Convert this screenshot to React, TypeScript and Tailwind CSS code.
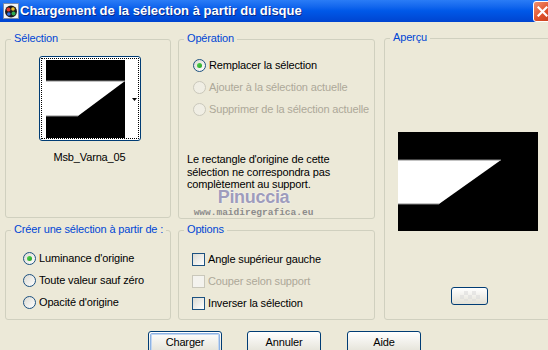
import React from "react";

const Radio = ({ checked = false, disabled = false }: { checked?: boolean; disabled?: boolean }) => (
  <span
    className={
      "relative inline-flex w-[13px] h-[13px] rounded-full border items-center justify-center shrink-0 " +
      (disabled
        ? "border-[#CAC8BB] bg-[#F0EEE4]"
        : "border-[#1C5180] bg-gradient-to-br from-[#DCDBD3] to-white")
    }
  >
    {checked && (
      <span className="w-[5px] h-[5px] rounded-full bg-gradient-to-br from-[#55D551] to-[#21A121]" />
    )}
  </span>
);

const Check = ({ disabled = false }: { disabled?: boolean }) => (
  <span
    className={
      "inline-block w-[13px] h-[13px] border shrink-0 " +
      (disabled
        ? "border-[#CAC8BB] bg-[#F4F3EE]"
        : "border-[#1C5180] bg-gradient-to-br from-[#DCDBD3] to-white")
    }
  />
);

const Group = ({
  label,
  className,
  children,
}: {
  label: string;
  className: string;
  children?: React.ReactNode;
}) => (
  <div className={"relative border border-[#D0D0BF] rounded-[3px] " + className}>
    <span className="absolute -top-[8px] left-[5px] px-[3px] bg-[#ECE9D8] text-[#0046D5] leading-[13px] whitespace-nowrap">
      {label}
    </span>
    {children}
  </div>
);

const XpButton = ({ label, def = false }: { label: string; def?: boolean }) => (
  <div className="w-[74px] h-[23px] rounded-[3px] border border-[#003C74] bg-gradient-to-b from-white to-[#E3E1D6] p-[1px] shrink-0">
    <div
      className={
        "w-full h-full rounded-[2px] flex items-center justify-center text-black " +
        (def ? "border border-[#8DB2E3] shadow-[inset_0_0_0_1px_#C2D6F1]" : "")
      }
    >
      {label}
    </div>
  </div>
);

export default function App() {
  return (
    <div
      className="w-[548px] h-[350px] overflow-hidden bg-[#ECE9D8] text-[11px] tracking-[-0.15px] text-black"
      style={{ fontFamily: '"Liberation Sans", Arial, sans-serif' }}
    >
      {/* Title bar */}
      <div className="h-[22px] flex items-center bg-gradient-to-b from-[#2A7CF6] via-[#0058E8] to-[#0044D0] relative">
        <div className="ml-[3px] w-[16px] h-[16px] shrink-0">
          <svg width="16" height="16" viewBox="0 0 16 16">
            <rect x="0.5" y="0.5" width="15" height="15" fill="#F4F4F4" stroke="#7A8AA8" />
            <circle cx="8" cy="8.5" r="6" fill="#1B1B1B" />
            <circle cx="5.5" cy="6.5" r="2" fill="#E33B2E" />
            <circle cx="10" cy="6" r="1.8" fill="#F0C22A" />
            <circle cx="10.5" cy="10.5" r="2" fill="#2FA84F" />
            <circle cx="5.8" cy="11" r="1.8" fill="#2F6FE0" />
          </svg>
        </div>
        <span
          className="ml-[1px] text-white font-bold text-[13px] tracking-normal whitespace-nowrap"
          style={{ textShadow: "1px 1px 0 #0A2A8A" }}
        >
          Chargement de la sélection à partir du disque
        </span>
        <div className="ml-auto mr-[-8px] mt-[1px] w-[23px] h-[21px] shrink-0 rounded-[3px] border border-white bg-gradient-to-br from-[#F09070] via-[#E0522C] to-[#C03A18] flex items-center justify-start pl-[3px]">
          <svg width="11" height="11" viewBox="0 0 11 11">
            <path d="M1.5 1.5 L9.5 9.5 M9.5 1.5 L1.5 9.5" stroke="white" strokeWidth="2.2" strokeLinecap="square" />
          </svg>
        </div>
      </div>

      {/* Body */}
      <div className="relative flex pl-[5px] pt-[17px]">
        {/* Left column */}
        <div className="w-[166px] shrink-0 flex flex-col gap-[12px]">
          <Group label="Sélection" className="h-[179px] flex flex-col items-center">
            <div className="mt-[16px] ml-[3px] w-[102px] h-[85px] rounded-[3px] border border-[#003C74] bg-white p-[1px]">
              <div className="w-full h-full border border-dotted border-black flex pl-[4px] pt-[1px]">
                <svg width="79" height="78" viewBox="0 0 79 78" className="shrink-0">
                  <rect width="79" height="78" fill="#000" />
                  <polygon points="0,21 79,21 32,56 0,56" fill="#fff" />
                  <line x1="0" y1="21" x2="79" y2="21" stroke="#888" strokeWidth="1" />
                  <line x1="0" y1="56" x2="32" y2="56" stroke="#888" strokeWidth="1" />
                </svg>
                <svg width="5" height="3" viewBox="0 0 5 3" className="self-center ml-[7px]">
                  <polygon points="0,0 5,0 2.5,3" fill="#000" />
                </svg>
              </div>
            </div>
            <div className="mt-[10px] ml-[3px] leading-[13px]">Msb_Varna_05</div>
          </Group>
          <Group label="Créer une sélection à partir de :" className="h-[90px] flex flex-col pl-[17px] pt-[21px] gap-[9px]">
            <div className="flex items-center gap-[3px] leading-[13px]">
              <Radio checked />
              <span>Luminance d'origine</span>
            </div>
            <div className="flex items-center gap-[3px] leading-[13px]">
              <Radio />
              <span>Toute valeur sauf zéro</span>
            </div>
            <div className="flex items-center gap-[3px] leading-[13px]">
              <Radio />
              <span>Opacité d'origine</span>
            </div>
          </Group>
        </div>

        {/* Middle column */}
        <div className="ml-[7px] w-[197px] shrink-0 flex flex-col gap-[11px]">
          <Group label="Opération" className="h-[180px] flex flex-col pl-[14px] pt-[19px]">
            <div className="flex flex-col gap-[9px]">
              <div className="flex items-center gap-[3px] leading-[13px]">
                <Radio checked />
                <span>Remplacer la sélection</span>
              </div>
              <div className="flex items-center gap-[3px] leading-[13px] text-[#ACA899]">
                <Radio disabled />
                <span>Ajouter à la sélection actuelle</span>
              </div>
              <div className="flex items-center gap-[3px] leading-[13px] text-[#ACA899]">
                <Radio disabled />
                <span className="whitespace-nowrap">Supprimer de la sélection actuelle</span>
              </div>
            </div>
            <div className="mt-[37px] -ml-[6px] leading-[12.5px]">
              Le rectangle d'origine de cette
              <br />
              sélection ne correspondra pas
              <br />
              complètement au support.
            </div>
          </Group>
          <Group label="Options" className="h-[90px] flex flex-col pl-[13px] pt-[22px] gap-[9px]">
            <div className="flex items-center gap-[3px] leading-[13px]">
              <Check />
              <span>Angle supérieur gauche</span>
            </div>
            <div className="flex items-center gap-[3px] leading-[13px] text-[#ACA899]">
              <Check disabled />
              <span>Couper selon support</span>
            </div>
            <div className="flex items-center gap-[3px] leading-[13px]">
              <Check />
              <span>Inverser la sélection</span>
            </div>
          </Group>
        </div>

        {/* Right column */}
        <div className="ml-[9px] w-[175px] shrink-0 -mt-[1px]">
          <Group label="Aperçu" className="h-[282px] flex flex-col pl-[13px]">
            <div className="mt-[93px]">
              <svg width="140" height="99" viewBox="0 0 140 99">
                <rect width="140" height="99" fill="#000" />
                <polygon points="0,28 103,28 41,72 0,72" fill="#fff" />
                <line x1="0" y1="28" x2="103" y2="28" stroke="#888" strokeWidth="1" />
                <line x1="0" y1="72" x2="41" y2="72" stroke="#888" strokeWidth="1" />
              </svg>
            </div>
            <div className="mt-[56px] ml-[53px] w-[37px] h-[18px] rounded-[3px] border border-[#003C74] bg-gradient-to-b from-white to-[#E3E1D6] flex items-center justify-center">
              <div
                className="w-[20px] h-[10px] opacity-60"
                style={{
                  backgroundImage:
                    "linear-gradient(45deg,#DDD 25%,transparent 25%,transparent 75%,#DDD 75%),linear-gradient(45deg,#DDD 25%,transparent 25%,transparent 75%,#DDD 75%)",
                  backgroundSize: "8px 8px",
                  backgroundPosition: "0 0,4px 4px",
                }}
              />
            </div>
          </Group>
        </div>

        {/* Watermark overlay */}
        <div className="absolute left-[193px] top-[166px] pointer-events-none flex flex-col items-center w-[121px]">
          <span
            className="font-bold text-[18px] leading-[18px] text-[#9E9CBC] tracking-[-0.3px]"
            style={{ textShadow: "0 0 2px #fff" }}
          >
            Pinuccia
          </span>
          <span
            className="mt-[2px] text-[9.5px] leading-[10px] text-[#8C8C8C] font-bold tracking-normal"
            style={{ fontFamily: '"Liberation Mono", monospace' }}
          >
            www.maidiregrafica.eu
          </span>
        </div>
      </div>

      {/* Buttons */}
      <div className="flex mt-[11px] pl-[148px]">
        <XpButton label="Charger" def />
        <div className="ml-[25px]">
          <XpButton label="Annuler" />
        </div>
        <div className="ml-[26px]">
          <XpButton label="Aide" />
        </div>
      </div>
    </div>
  );
}
